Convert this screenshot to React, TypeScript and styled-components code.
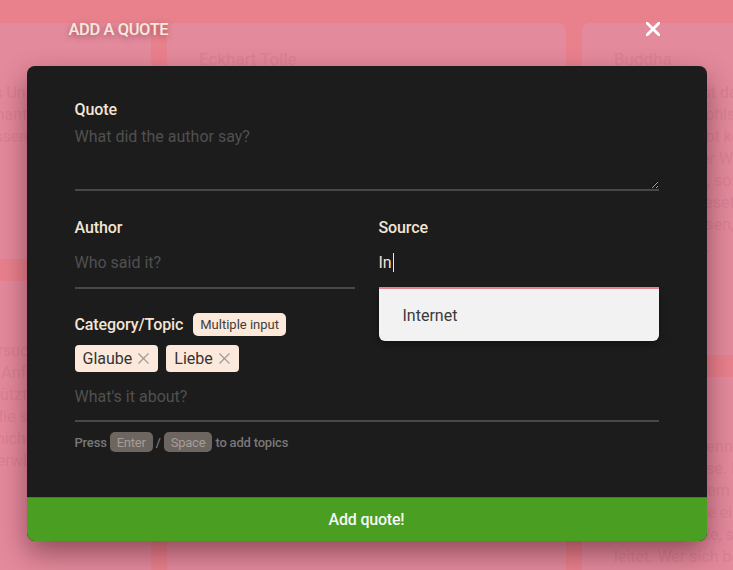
import React from 'react';
import styled, { createGlobalStyle } from 'styled-components';

const GlobalStyle = createGlobalStyle`
  html, body { margin: 0; padding: 0; }
  body {
    font-family: Roboto, "Noto Sans", "Liberation Sans", sans-serif;
    overflow: hidden;
  }
  * { box-sizing: border-box; }
`;

const Page = styled.div`
  position: relative;
  width: 733px;
  height: 570px;
  overflow: hidden;
  background: #e9818d;
`;

const Board = styled.div`
  display: grid;
  grid-template-columns: repeat(3, 399px);
  column-gap: 16px;
  justify-content: center;
  padding-top: 23px;
`;

const Column = styled.div`
  display: flex;
  flex-direction: column;
  gap: 22px;
`;

const Card = styled.div<{ $h: number }>`
  height: ${p => p.$h}px;
  background: #e48a9d;
  border-radius: 8px;
  padding: 25px 32px;
  color: #db8095;
  font-size: 16px;
  line-height: 22px;
  overflow: hidden;
`;

const CardTitle = styled.div`
  font-size: 17px;
  margin-bottom: 12px;
`;

const Overlay = styled.div`
  position: absolute;
  inset: 0;
  display: flex;
  flex-direction: column;
  align-items: center;
  padding-top: 19px;
`;

const Header = styled.div`
  width: 680px;
  display: flex;
  align-items: center;
  justify-content: space-between;
  padding: 0 46px 0 42px;
  height: 20px;
  margin-bottom: 27px;
`;

const Title = styled.h1`
  margin: 0;
  font-size: 16.5px;
  font-weight: 500;
  letter-spacing: -0.4px;
  color: #f8e9dc;
  text-shadow: 0 2px 6px rgba(80, 20, 30, 0.45);
`;

const CloseButton = styled.button`
  border: 0;
  background: none;
  padding: 0;
  width: 16px;
  height: 16px;
  display: flex;
  align-items: center;
  justify-content: center;
  cursor: pointer;
`;

const Modal = styled.form`
  width: 680px;
  height: 475px;
  background: #1c1c1c;
  border-radius: 8px;
  box-shadow: 0 12px 28px rgba(40, 0, 10, 0.45);
  display: flex;
  flex-direction: column;
`;

const Body = styled.div`
  flex: 1;
  padding: 34px 48px 0;
`;

const Label = styled.label`
  display: block;
  font-size: 16px;
  font-weight: 500;
  line-height: 19px;
  letter-spacing: -0.1px;
  color: #f4e4d4;
`;

const fieldText = `
  width: 100%;
  background: transparent;
  border: 0;
  border-bottom: 2px solid #484848;
  outline: none;
  font-family: Roboto, "Noto Sans", sans-serif;
  font-size: 16px;
  line-height: 19px;
  color: #f4e4d4;
  &::placeholder { color: #505050; }
`;

const TextArea = styled.textarea`
  ${fieldText}
  display: block;
  height: 72px;
  padding: 8px 0;
  resize: vertical;
`;

const Input = styled.input<{ $pt?: number; $pb?: number }>`
  ${fieldText}
  display: block;
  padding: ${p => p.$pt ?? 16}px 0 ${p => p.$pb ?? 15}px;
`;

const Row = styled.div`
  display: grid;
  grid-template-columns: 1fr 1fr;
  column-gap: 24px;
  margin-top: 27px;
`;

const FieldWrap = styled.div`
  position: relative;
`;

const ActiveInput = styled.div`
  display: flex;
  align-items: center;
  padding: 16px 0 15px;
  font-size: 16px;
  line-height: 19px;
  color: #f4e4d4;
  border-bottom: 2px solid #e98a96;
`;

const Caret = styled.span`
  display: inline-block;
  width: 1px;
  height: 19px;
  margin-left: 1px;
  background: #f4e4d4;
`;

const Suggestions = styled.ul`
  position: absolute;
  left: 0;
  right: 0;
  top: 100%;
  margin: 0;
  padding: 0;
  list-style: none;
  background: #f2f2f2;
  border-radius: 0 0 6px 6px;
  box-shadow: 0 3px 6px rgba(0, 0, 0, 0.35);
  z-index: 2;
`;

const Suggestion = styled.li`
  padding: 17px 24px 16px;
  font-size: 16px;
  line-height: 19px;
  color: #3a3a3a;
`;

const TopicSection = styled.div`
  margin-top: 24px;
`;

const LabelRow = styled.div`
  display: flex;
  align-items: center;
  gap: 10px;
`;

const Badge = styled.span`
  display: inline-flex;
  align-items: center;
  height: 23px;
  padding: 0 7px;
  border-radius: 5px;
  background: #fde9da;
  color: #3d3d3d;
  font-size: 13px;
`;

const Tags = styled.div`
  display: flex;
  gap: 8px;
  margin-top: 9px;
`;

const Tag = styled.span`
  display: inline-flex;
  align-items: center;
  gap: 6px;
  height: 27px;
  padding: 0 9px 0 8px;
  border-radius: 4px;
  background: #fde9dc;
  color: #333;
  font-size: 16px;
  line-height: 19px;
`;

const Helper = styled.div`
  display: flex;
  align-items: center;
  gap: 3px;
  margin-top: 10px;
  font-size: 13px;
  font-weight: 500;
  letter-spacing: -0.2px;
  color: #787878;
`;

const Kbd = styled.kbd`
  display: inline-flex;
  align-items: center;
  height: 20px;
  padding: 0 7px;
  border-radius: 5px;
  background: #6c6560;
  color: #a69d96;
  font-family: Roboto, "Noto Sans", sans-serif;
  font-size: 13px;
  font-weight: 400;
`;

const Submit = styled.button`
  height: 44px;
  border: 0;
  border-top: 1px solid #3f8420;
  border-radius: 0 0 8px 8px;
  background: #4a9e22;
  color: #f7f7f7;
  font-family: Roboto, "Noto Sans", sans-serif;
  font-size: 16px;
  font-weight: 500;
  letter-spacing: -0.2px;
  cursor: pointer;
`;

const Cross = ({ size = 11, color = '#9a9a9a', width = 1.4 }: { size?: number; color?: string; width?: number }) => (
  <svg width={size} height={size} viewBox="0 0 12 12">
    <path d="M1 1L11 11M11 1L1 11" stroke={color} strokeWidth={width} strokeLinecap="square" />
  </svg>
);

const columns = [
  [
    { h: 236, title: 'Albert Einstein', text: 'Zwei Dinge sind unendlich, das Universum und die menschliche Dummheit. Phantasie ist wichtiger als Wissen, denn Wissen ist begrenzt und muss man akzeptieren.' },
    { h: 400, title: 'Hermann Hesse', text: 'Man muss das Unmögliche versuchen, um das Mögliche zu erreichen. Jedem Anfang wohnt ein Zauber inne, der uns beschützt und der uns hilft, zu leben. Die Menschen, die so viel Kraft zum Wünschen haben, geben nicht auf. Wer Verstand hat, der sucht die Überwindung und Verzicht, den festen Weg.' },
  ],
  [
    { h: 620, title: 'Eckhart Tolle', text: 'Erkenne, dass der gegenwärtige Moment alles ist, was du jemals hast. Mache das Jetzt zum Hauptfokus deines Lebens. Wo immer du bist, sei ganz dort. Das Leben ist der Tänzer und du bist der Tanz. Humor, Liebe und Freundschaft sind die Wege.' },
  ],
  [
    { h: 332, title: 'Buddha', text: 'Gesundheit ist das höchste Gut, Zufriedenheit der größte Wohlstand, Vertrauen ist der beste Freund. Es gibt keinen Weg zum Frieden, denn Frieden ist der Weg. Hass wird nicht durch Hass besiegt, sondern nur durch Liebe; das ist ein ewiges Gesetz. Alles, was wir sind, ist das Ergebnis dessen, was wir gedacht haben; der Zorn zerstört.' },
    { h: 300, title: 'Laotse', text: 'Wer andere kennt, ist klug. Wer sich selbst kennt, ist weise. Eine Reise von tausend Meilen beginnt mit dem ersten Schritt. Zwei Türen hat das Leben, die eine ist der Beginn. Das Ziel ist nicht das Ende, sondern die Bewegung, die uns leitet. Wer sich bemüht, geht seinen Weg. Zukunft ist Stille.' },
  ],
];

export default function App() {
  return (
    <>
      <GlobalStyle />
      <Page>
        <Board aria-hidden>
          {columns.map((col, i) => (
            <Column key={i}>
              {col.map(card => (
                <Card key={card.title} $h={card.h}>
                  <CardTitle>{card.title}</CardTitle>
                  {card.text}
                </Card>
              ))}
            </Column>
          ))}
        </Board>

        <Overlay>
          <Header>
            <Title>ADD A QUOTE</Title>
            <CloseButton type="button" aria-label="Close">
              <Cross size={14} color="#ffffff" width={2.4} />
            </CloseButton>
          </Header>

          <Modal onSubmit={e => e.preventDefault()}>
            <Body>
              <Label>Quote</Label>
              <TextArea placeholder="What did the author say?" />

              <Row>
                <div>
                  <Label>Author</Label>
                  <Input placeholder="Who said it?" />
                </div>
                <FieldWrap>
                  <Label>Source</Label>
                  <ActiveInput>
                    In<Caret />
                  </ActiveInput>
                  <Suggestions>
                    <Suggestion>Internet</Suggestion>
                  </Suggestions>
                </FieldWrap>
              </Row>

              <TopicSection>
                <LabelRow>
                  <Label>Category/Topic</Label>
                  <Badge>Multiple input</Badge>
                </LabelRow>
                <Tags>
                  <Tag>Glaube <Cross /></Tag>
                  <Tag>Liebe <Cross /></Tag>
                </Tags>
                <Input placeholder="What's it about?" $pt={15} $pb={14} />
                <Helper>
                  Press <Kbd>Enter</Kbd> / <Kbd>Space</Kbd> to add topics
                </Helper>
              </TopicSection>
            </Body>
            <Submit type="submit">Add quote!</Submit>
          </Modal>
        </Overlay>
      </Page>
    </>
  );
}
